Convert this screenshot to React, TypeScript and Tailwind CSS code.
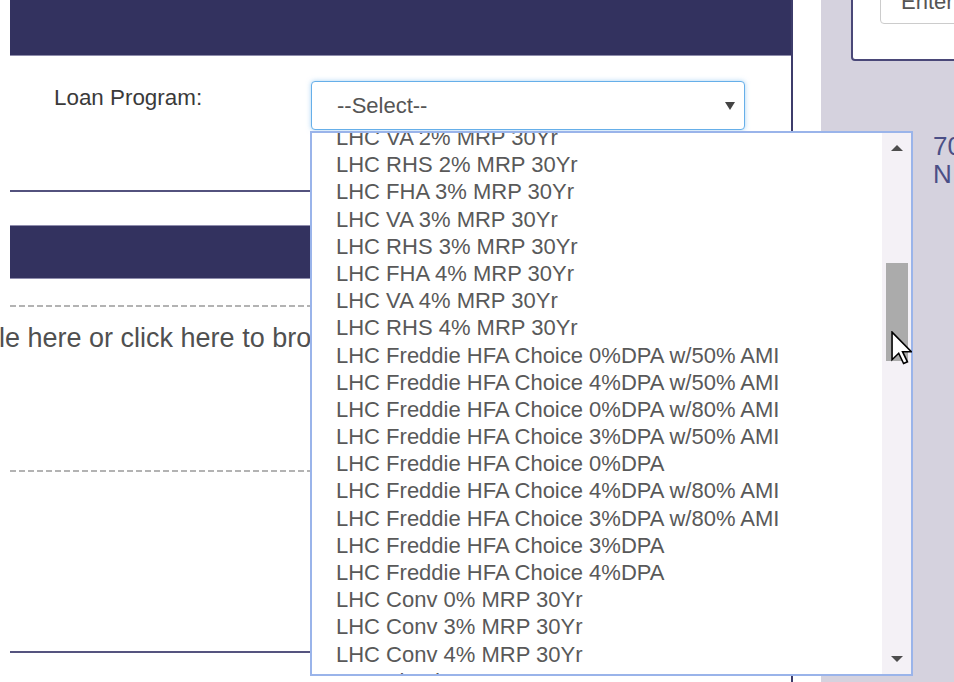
import React from "react";

const programs = [
  "LHC VA 2% MRP 30Yr",
  "LHC RHS 2% MRP 30Yr",
  "LHC FHA 3% MRP 30Yr",
  "LHC VA 3% MRP 30Yr",
  "LHC RHS 3% MRP 30Yr",
  "LHC FHA 4% MRP 30Yr",
  "LHC VA 4% MRP 30Yr",
  "LHC RHS 4% MRP 30Yr",
  "LHC Freddie HFA Choice 0%DPA w/50% AMI",
  "LHC Freddie HFA Choice 4%DPA w/50% AMI",
  "LHC Freddie HFA Choice 0%DPA w/80% AMI",
  "LHC Freddie HFA Choice 3%DPA w/50% AMI",
  "LHC Freddie HFA Choice 0%DPA",
  "LHC Freddie HFA Choice 4%DPA w/80% AMI",
  "LHC Freddie HFA Choice 3%DPA w/80% AMI",
  "LHC Freddie HFA Choice 3%DPA",
  "LHC Freddie HFA Choice 4%DPA",
  "LHC Conv 0% MRP 30Yr",
  "LHC Conv 3% MRP 30Yr",
  "LHC Conv 4% MRP 30Yr",
  "LHC Fixed Rate",
];

function Cursor() {
  return (
    <svg
      className="absolute left-[891px] top-[331px] z-20"
      width="21"
      height="34"
      viewBox="0 0 12 19.4"
    >
      <path
        d="M0.6 0.6 L0.6 16.4 L4.4 12.7 L7.2 18.6 L9.4 17.6 L6.6 11.8 L11.6 11.8 Z"
        fill="#ffffff"
        stroke="#000000"
        strokeWidth="0.9"
        strokeLinejoin="miter"
      />
    </svg>
  );
}

function ProgramList() {
  return (
    <div className="absolute left-0 top-[50px] z-10 flex h-[545px] w-[603px] border-2 border-[#9ab4ea] bg-white">
      <div className="flex-1 overflow-hidden">
        <div className="mt-[-9px]">
          {programs.map((p) => (
            <div
              key={p}
              className="h-[27.2px] whitespace-nowrap pl-[24px] text-[22px] leading-[27.2px] text-[#595959]"
            >
              {p}
            </div>
          ))}
        </div>
      </div>
      <div className="flex w-[29px] flex-col bg-[#f4f1f6]">
        <div className="flex h-[30px] items-center justify-center">
          <div className="h-0 w-0 border-x-[6px] border-b-[6px] border-x-transparent border-b-[#4d4d4d]" />
        </div>
        <div className="ml-[4px] mt-[100px] h-[98px] w-[22px] bg-[#ababab]" />
        <div className="flex-1" />
        <div className="flex h-[30px] items-center justify-center">
          <div className="h-0 w-0 border-x-[6px] border-t-[6px] border-x-transparent border-t-[#4d4d4d]" />
        </div>
      </div>
    </div>
  );
}

export default function App() {
  return (
    <div className="relative flex h-[682px] w-[954px] overflow-hidden bg-white font-['Liberation_Sans',Arial,sans-serif]">
      {/* main column */}
      <div className="w-[821px] shrink-0 bg-white pl-[10px]">
        <div className="flex h-full w-[783px] flex-col border-r-2 border-[#3d3c6b]">
          <div className="h-[56px] shrink-0 border-b border-[#8e8cab] bg-[#33325f]" />

          <div className="flex items-start pt-[25px]">
            <div className="mt-[5px] w-[300px] shrink-0 pl-[44px] text-[22.4px] leading-[24px] text-[#3a3a3a]">
              Loan Program:
            </div>
            <div className="relative">
              <div className="ml-[1px] flex h-[49px] w-[434px] items-center justify-between rounded-[4px] border border-[#66afe9] bg-white pl-[25px] pr-[9px] shadow-[0_0_5px_rgba(102,175,233,0.55)]">
                <span className="text-[22px] leading-[24px] text-[#555555]">--Select--</span>
                <div className="h-0 w-0 border-x-[5px] border-t-[8px] border-x-transparent border-t-[#444444]" />
              </div>
              <ProgramList />
            </div>
          </div>

          <div className="mt-[60px] h-[2px] shrink-0 bg-[#53527e]" />

          <div className="mt-[33px] h-[54px] shrink-0 border-y border-[#8f8dad] bg-[#33325f]" />

          <div className="mt-[26px] h-[2px] shrink-0 bg-[repeating-linear-gradient(90deg,#b3b3b3_0_6px,transparent_6px_9px)]" />

          <div className="ml-[-90.5px] mt-[15px] whitespace-nowrap text-[27px] leading-[32px] text-[#505050]">
            Drop file here or click here to browse
          </div>

          <div className="mt-[116px] h-[2px] shrink-0 bg-[repeating-linear-gradient(90deg,#b3b3b3_0_6px,transparent_6px_9px)]" />

          <div className="mt-[179px] h-[2px] shrink-0 bg-[#55547f]" />
        </div>
      </div>

      {/* side column */}
      <div className="flex-1 overflow-hidden bg-[#d5d2de]">
        <div className="ml-[30px] mt-[-40px] h-[101px] w-[200px] rounded-[4px] border-2 border-[#4a4878] bg-white pl-[27px]">
          <div className="flex h-[62px] w-[160px] items-end rounded-[4px] border border-[#cccccc] bg-white pb-[10px] pl-[20px] text-[22px] leading-[22px] text-[#555555]">
            Enter
          </div>
        </div>
        <div className="ml-[112px] mt-[71px] whitespace-nowrap text-[26px] leading-[28px] text-[#4b4f86]">
          <div>70</div>
          <div>N</div>
        </div>
      </div>

      <Cursor />
    </div>
  );
}
